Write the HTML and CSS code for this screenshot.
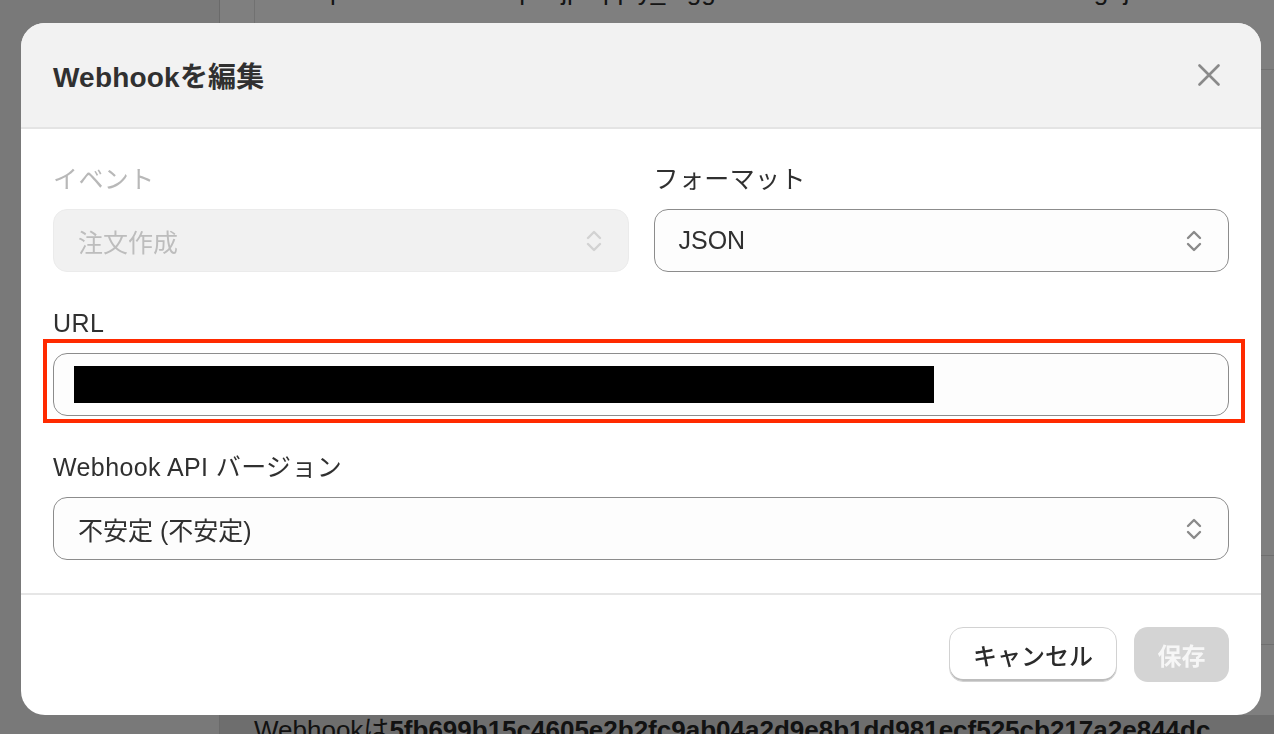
FILE: index.html
```html
<!DOCTYPE html>
<html lang="ja">
<head>
<meta charset="utf-8">
<title>Webhookを編集</title>
<link rel="stylesheet" href="styles.css">
</head>
<body>
<div class="page">
  <aside class="sidebar"></aside>
  <main class="content">
    <div class="top-band">
      <p class="top-line">https://hooks.example.jp/apply_trigger/webhook?id=order-create&amp;lang=ja</p>
    </div>
    <div class="rows">
      <div class="row-line"></div>
      <div class="row-line"></div>
    </div>
    <div class="bottom-band">
      <p class="bottom-line">Webhookは<b>5fb699b15c4605e2b2fc9ab04a2d9e8b1dd981ecf525cb217a2e844dc</b></p>
    </div>
  </main>
</div>

<div class="overlay">
  <div class="modal">
    <header class="modal-header">
      <h2 class="modal-title">Webhookを編集</h2>
      <button class="close-btn" aria-label="閉じる">
        <svg width="22" height="22" viewBox="0 0 22 22"><path d="M1.5 1.5 L20.5 20.5 M20.5 1.5 L1.5 20.5" stroke="#8a8a8a" stroke-width="2.6" stroke-linecap="round" fill="none"/></svg>
      </button>
    </header>

    <section class="modal-body">
      <div class="row-2">
        <div class="field">
          <div class="label label-disabled">イベント</div>
          <div class="select select-disabled">
            <span>注文作成</span>
            <svg class="chev" width="16" height="24" viewBox="0 0 16 24"><path d="M2 9 L8 3 L14 9 M2 15 L8 21 L14 15" stroke="#d2d2d2" stroke-width="2.4" stroke-linecap="round" stroke-linejoin="round" fill="none"/></svg>
          </div>
        </div>
        <div class="field">
          <div class="label">フォーマット</div>
          <div class="select">
            <span>JSON</span>
            <svg class="chev" width="16" height="24" viewBox="0 0 16 24"><path d="M2 9 L8 3 L14 9 M2 15 L8 21 L14 15" stroke="#8a8a8a" stroke-width="2.4" stroke-linecap="round" stroke-linejoin="round" fill="none"/></svg>
          </div>
        </div>
      </div>

      <div class="field">
        <div class="label">URL</div>
        <div class="url-wrap">
          <div class="input">
            <span class="redact"></span>
          </div>
          <div class="annot"></div>
        </div>
      </div>

      <div class="field">
        <div class="label">Webhook API バージョン</div>
        <div class="select">
          <span>不安定 (不安定)</span>
          <svg class="chev" width="16" height="24" viewBox="0 0 16 24"><path d="M2 9 L8 3 L14 9 M2 15 L8 21 L14 15" stroke="#8a8a8a" stroke-width="2.4" stroke-linecap="round" stroke-linejoin="round" fill="none"/></svg>
        </div>
      </div>
    </section>

    <footer class="modal-footer">
      <button class="btn btn-cancel">キャンセル</button>
      <button class="btn btn-save">保存</button>
    </footer>
  </div>
</div>
</body>
</html>
```

FILE: styles.css
```css
* { box-sizing: border-box; }

html, body {
  margin: 0;
  height: 100%;
}

body {
  font-family: "Liberation Sans", "Noto Sans CJK JP", sans-serif;
  color: #303030;
  overflow: hidden;
}

/* ---------- background page ---------- */
.page {
  display: flex;
  height: 100vh;
  background: #ffffff;
  overflow: hidden;
}

.sidebar {
  flex: none;
  width: 220px;
  background: #f3f3f3;
  border-right: 1px solid #d4d4d4;
}

.content {
  flex: 1;
  display: flex;
  flex-direction: column;
  overflow: hidden;
}

.top-band {
  flex: none;
  height: 70px;
  margin-left: 34px;
  border-left: 1px solid #e2e2e2;
  border-bottom: 1px solid #e2e2e2;
  overflow: hidden;
}

.top-line {
  margin: -24px 0 0 46px;
  font-size: 26px;
  line-height: 30px;
  white-space: nowrap;
  color: #2a2a2a;
}

.rows {
  flex: 1;
  display: flex;
  flex-direction: column;
  justify-content: flex-end;
  gap: 88px;
  padding-bottom: 70px;
}

.row-line {
  height: 1px;
  background: #dedede;
}

.bottom-band {
  flex: none;
  height: 19px;
  background: #dcdcdc;
  padding-left: 34px;
  overflow: hidden;
}

.bottom-line {
  margin: 0;
  font-size: 26px;
  line-height: 30px;
  white-space: nowrap;
  color: #252525;
}

.bottom-line b {
  font-weight: 700;
}

/* ---------- overlay + modal ---------- */
.overlay {
  position: fixed;
  inset: 0;
  background: rgba(0, 0, 0, 0.5);
  display: flex;
  padding: 23px 13px 19px 21px;
}

.modal {
  flex: 1;
  display: flex;
  flex-direction: column;
  background: #ffffff;
  border-radius: 24px;
  overflow: hidden;
}

.modal-header {
  flex: none;
  height: 106px;
  background: #f2f2f2;
  border-bottom: 2px solid #e4e4e4;
  display: flex;
  align-items: center;
  justify-content: space-between;
  padding: 0 41px 0 32px;
}

.modal-title {
  margin: 0;
  font-size: 28px;
  font-weight: 700;
  color: #303030;
  letter-spacing: 0.2px;
}

.close-btn {
  border: 0;
  background: none;
  padding: 0;
  width: 22px;
  height: 22px;
  display: flex;
}

.modal-body {
  flex: none;
  display: flex;
  flex-direction: column;
  gap: 36px;
  padding: 35px 32px 33px;
  border-bottom: 2px solid #e6e6e6;
}

.row-2 {
  display: grid;
  grid-template-columns: 1fr 1fr;
  gap: 25px;
}

.field {
  display: flex;
  flex-direction: column;
}

.label {
  font-size: 25px;
  line-height: 30px;
  color: #303030;
  margin-bottom: 15px;
  white-space: nowrap;
  letter-spacing: 0.4px;
}

.label-disabled {
  color: #b8b8b8;
}

.select {
  height: 63px;
  border: 1px solid #8c8c8c;
  border-radius: 14px;
  background: #fdfdfd;
  display: flex;
  align-items: center;
  justify-content: space-between;
  padding: 0 26px 0 24px;
  font-size: 25px;
  color: #303030;
}

.select-disabled {
  background: #f1f1f1;
  border-color: #ebebeb;
  color: #bdbdbd;
}

.chev {
  flex: none;
}

.url-wrap {
  position: relative;
}

.input {
  height: 63px;
  border: 1px solid #8c8c8c;
  border-radius: 14px;
  background: #fdfdfd;
  display: flex;
  align-items: center;
  padding: 0 20px;
}

.redact {
  display: block;
  width: 860px;
  height: 37px;
  background: #000000;
}

.annot {
  position: absolute;
  left: -10px;
  right: -16px;
  top: -14px;
  bottom: -7px;
  border: 4px solid #ff2a00;
  pointer-events: none;
}

.modal-footer {
  flex: 1;
  display: flex;
  justify-content: flex-end;
  align-items: flex-start;
  gap: 17px;
  padding: 32px 32px 0;
}

.btn {
  height: 55px;
  border-radius: 14px;
  font-family: inherit;
  font-size: 24px;
  font-weight: 500;
  padding: 0 23px;
  white-space: nowrap;
  cursor: pointer;
}

.btn-cancel {
  background: #ffffff;
  color: #2b2b2b;
  border: 1px solid #d2d2d2;
  box-shadow: inset 0 -2px 0 #bdbdbd;
}

.btn-save {
  background: #d4d4d4;
  color: #f6f6f6;
  border: 0;
  width: 95px;
  padding: 0;
  font-weight: 700;
}
```
